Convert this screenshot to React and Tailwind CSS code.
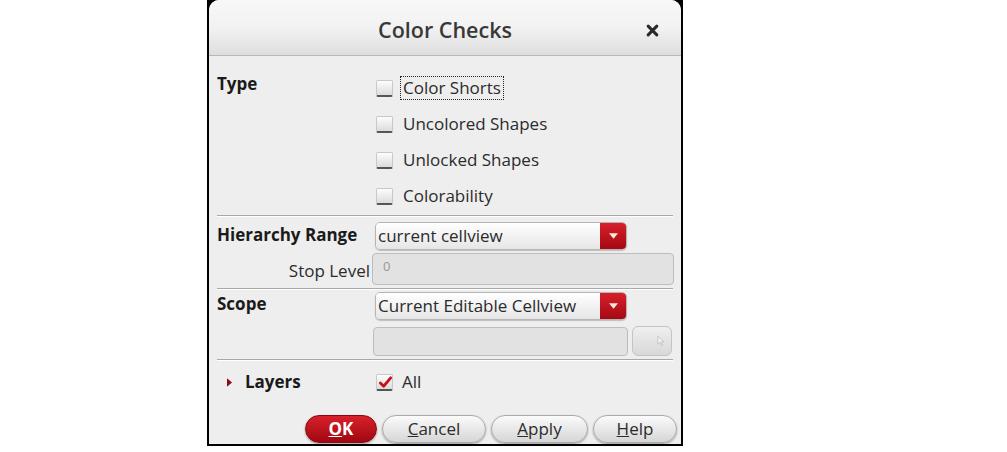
import React from "react";

function Check({ checked = false }) {
  return (
    <span className="relative inline-block w-[17px] h-[17px] rounded-[2px] border border-[#c8c8c8] border-b-[#555] border-b-2 bg-gradient-to-b from-[#fdfdfd] to-[#dcdcdc] shrink-0">
      {checked && (
        <svg viewBox="0 0 16 16" className="absolute left-[1px] top-[0px] w-[15px] h-[15px]">
          <path d="M2.5 8.5 L6 12 L13.5 3" fill="none" stroke="#c8101e" strokeWidth="3" strokeLinecap="round" strokeLinejoin="round" />
        </svg>
      )}
    </span>
  );
}

function CheckRow({ label, checked, focus }) {
  return (
    <div className="flex items-center h-[36px] gap-[8px]">
      <Check checked={checked} />
      <span className={"text-[17px] leading-[22px] text-[#2b2b2b] px-[2px] " + (focus ? "outline outline-1 outline-dotted outline-[#222]" : "")}>
        {label}
      </span>
    </div>
  );
}

function Combo({ value }) {
  return (
    <div className="flex w-[252px] h-[28px] rounded-[5px] border border-[#b5b5b5] overflow-hidden shadow-[0_1px_1px_rgba(0,0,0,0.2)]">
      <div className="flex-1 flex items-center pl-[2px] bg-gradient-to-b from-[#ffffff] to-[#e6e6e6] text-[17px] text-[#2b2b2b]">
        {value}
      </div>
      <div className="w-[26px] flex items-center justify-center bg-gradient-to-b from-[#d8202c] to-[#a40812]">
        <svg viewBox="0 0 10 6" className="w-[9px] h-[6px]">
          <path d="M0 0 L10 0 L5 6 Z" fill="#f4ead8" />
        </svg>
      </div>
    </div>
  );
}

function Btn({ children, primary, w }) {
  return (
    <div
      className={
        "h-[28px] rounded-full flex items-center justify-center text-[17px] shadow-[0_1px_2px_rgba(0,0,0,0.35)] " +
        (primary
          ? "bg-gradient-to-b from-[#d9202b] to-[#a00710] text-white font-bold border border-[#8a0a10]"
          : "bg-gradient-to-b from-[#fbfbfb] to-[#d6d6d6] text-[#2b2b2b] border border-[#aaa]") +
        " " + w
      }
    >
      {children}
    </div>
  );
}

function Sep({ mt }) {
  return <div className={"mx-[8px] border-t border-[#a8a8a8] border-b border-b-white " + mt} />;
}

export default function App() {
  return (
    <div className="w-[1007px] h-[452px] bg-white" style={{ fontFamily: '"Open Sans", "Noto Sans", sans-serif' }}>
      <div className="ml-[207px] w-[476px] h-[446px] bg-black px-[2px] pb-[2px]">
        <div className="h-full rounded-t-[10px] bg-[#eeeeee] flex flex-col">
          {/* title bar */}
          <div className="relative h-[56px] shrink-0 rounded-t-[10px] bg-gradient-to-b from-[#f8f8f8] via-[#f2f2f2] to-[#dedede] border-b border-[#b8b8b8] flex items-center justify-center">
            <span className="text-[21.5px] text-[#383838] font-semibold mt-[6px]">Color Checks</span>
            <span className="absolute right-[22px] top-[24px] text-[#222]">
              <svg viewBox="0 0 12 12" className="w-[13px] h-[13px]">
                <path d="M2 2 L10 10 M10 2 L2 10" stroke="#2a2a2a" strokeWidth="2.8" strokeLinecap="round" />
              </svg>
            </span>
          </div>

          {/* Type */}
          <div className="flex pl-[8px] pt-[17px]">
            <div className="w-[159px] text-[17px] font-bold text-[#1a1a1a] leading-[22px]">Type</div>
            <div className="flex flex-col -mt-[3px]">
              <CheckRow label="Color Shorts" focus />
              <CheckRow label="Uncolored Shapes" />
              <CheckRow label="Unlocked Shapes" />
              <CheckRow label="Colorability" />
            </div>
          </div>
          <Sep mt="mt-[1px]" />

          {/* Hierarchy range */}
          <div className="flex items-center pl-[8px] mt-[5px] h-[28px]">
            <div className="w-[158px] text-[17px] font-bold text-[#1a1a1a] -mt-[3px]">Hierarchy Range</div>
            <Combo value="current cellview" />
          </div>
          <div className="flex items-center mt-[3px] h-[32px]">
            <div className="w-[163px] text-right text-[17px] text-[#2b2b2b] pr-[2px] pt-[4px]">Stop Level</div>
            <div className="w-[302px] h-[32px] rounded-[4px] border border-[#bdbdbd] bg-[#e2e2e2] text-[13px] text-[#999] pl-[10px] pt-[3px]">0</div>
          </div>
          <Sep mt="mt-[3px]" />

          {/* Scope */}
          <div className="flex items-center pl-[8px] mt-[2px] h-[28px]">
            <div className="w-[158px] text-[17px] font-bold text-[#1a1a1a] -mt-[4px]">Scope</div>
            <Combo value="Current Editable Cellview" />
          </div>
          <div className="flex items-center mt-[6px] h-[30px]">
            <div className="w-[164px]" />
            <div className="w-[255px] h-[29px] rounded-[4px] border border-[#bdbdbd] bg-[#e2e2e2]" />
            <div className="ml-[4px] w-[40px] h-[30px] rounded-[6px] border border-[#c4c4c4] bg-gradient-to-b from-[#efefef] to-[#d8d8d8] flex items-center justify-end pr-[6px]">
              <svg viewBox="0 0 10 14" className="w-[8px] h-[12px]">
                <path d="M1 1 L1 11 L3.5 8.5 L5.5 13 L7 12.3 L5 8 L8.5 8 Z" fill="#f2f2f2" stroke="#b3b3b3" strokeWidth="0.8" />
              </svg>
            </div>
          </div>
          <Sep mt="mt-[3px]" />

          {/* Layers */}
          <div className="flex items-center mt-[6px] h-[30px]">
            <div className="w-[167px] flex items-center pl-[18px]">
              <svg viewBox="0 0 6 10" className="w-[5px] h-[9px]">
                <path d="M0 0 L6 5 L0 10 Z" fill="#8a0d14" />
              </svg>
              <span className="ml-[13px] text-[17px] font-bold text-[#1a1a1a]">Layers</span>
            </div>
            <div className="flex items-center gap-[9px]">
              <Check checked />
              <span className="text-[17px] text-[#2b2b2b]">All</span>
            </div>
          </div>

          {/* Buttons */}
          <div className="flex justify-end gap-[5px] pr-[4px] mt-[18px]">
            <Btn primary w="w-[72px]"><span><span className="underline">O</span>K</span></Btn>
            <Btn w="w-[104px]"><span><span className="underline">C</span>ancel</span></Btn>
            <Btn w="w-[97px]"><span><span className="underline">A</span>pply</span></Btn>
            <Btn w="w-[84px]"><span><span className="underline">H</span>elp</span></Btn>
          </div>
        </div>
      </div>
    </div>
  );
}
